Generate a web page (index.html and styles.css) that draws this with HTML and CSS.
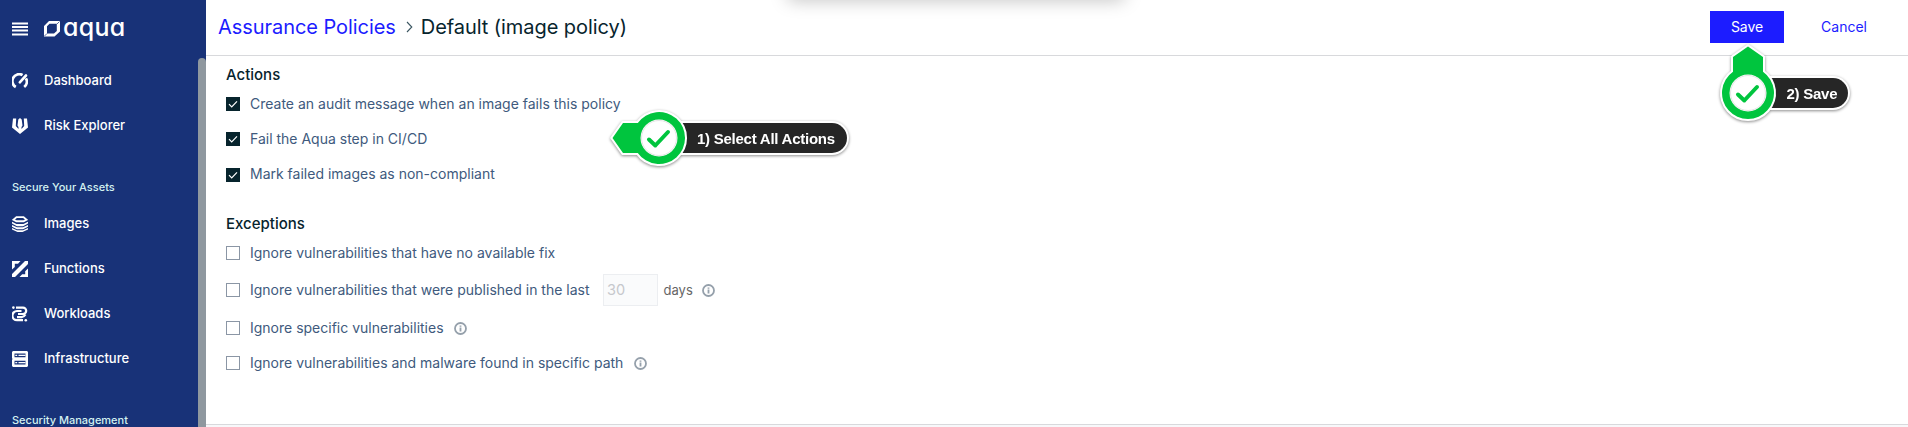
FILE: index.html
```html
<!DOCTYPE html>
<html lang="en">
<head>
<meta charset="utf-8">
<title>Assurance Policies</title>
<link rel="stylesheet" href="styles.css">
</head>
<body>
<div class="app">
  <aside class="sidebar">
    <div class="brand">
      <svg class="menu-icon" width="16" height="14" viewBox="0 0 16 14"><path d="M0 1.500h16M0 5h16M0 8.500h16M0 12.500h16" stroke="#fff" stroke-width="2"/></svg>
      <svg class="logo-mark" width="16" height="16" viewBox="0 0 16 16"><path fill="#fff" fill-rule="evenodd" d="M5 0H16V10.500L10.500 15.500H0V5ZM5.500 2.800L3 5.300V12.500H10L12.800 10V2.800Z"/><path d="M13 3L15.500.5M.5 15L3 12.500" stroke="#183278" stroke-width=".7"/></svg>
      <span class="logo-text">aqua</span>
    </div>
    <nav class="nav">
      <a class="nav-item"><svg class="nav-icon" viewBox="0 0 16 16"><path d="M3.800 14A6.600 6.600 0 0 1 10.500 2.100M13.900 5.400A6.600 6.600 0 0 1 12.200 14" fill="none" stroke="#fff" stroke-width="2.800"/><path d="M7.800 9.300L14 2.500" stroke="#fff" stroke-width="2.600" stroke-linecap="round"/></svg><span>Dashboard</span></a>
      <a class="nav-item"><svg class="nav-icon" viewBox="0 0 16 16"><path fill="#fff" d="M1 .5H4.200L3.800 8L6.500 11V9L5.500 7.500L6.300 1.500L8 0L9.700 1.500L10.500 7.500L9.500 9V11L12.200 8L11.800 .5H15L16 9.500L8 16L0 9.500Z"/></svg><span>Risk Explorer</span></a>
      <div class="nav-section"><span>Secure Your Assets</span></div>
      <a class="nav-item"><svg class="nav-icon" viewBox="0 0 16 16"><path d="M4.500 1.100H11.500L14.500 3.800L11.500 5.300H4.500L1.500 3.800Z" fill="none" stroke="#fff" stroke-width="1.900"/><path d="M0 5.800L4.500 8H11.500L16 5.800V7.500L11 10.300H5L0 7.500ZM0 9L5 11.300H11L16 9V10.800L11 13.300H5L0 10.800ZM0 12L5 14.200H11L16 12V13.500L10.500 16H5.500L0 13.500Z" fill="#fff"/></svg><span>Images</span></a>
      <a class="nav-item"><svg class="nav-icon" viewBox="0 0 16 16"><path fill="#fff" d="M0 0H8.500L6 2.800H2.800V6L0 8.500ZM13 0H16V3L3 16H0V13ZM16 7.500V16H7.500L10.200 13.200H13.200V10.200Z"/></svg><span>Functions</span></a>
      <a class="nav-item"><svg class="nav-icon" viewBox="0 0 16 16"><path d="M4 1.600H11A3.200 3.200 0 0 1 11 8H6M9.500 5H5A4.600 4.600 0 0 0 5 14.200H11M5 11.200H9.500Q12 11 13.500 8.500" fill="none" stroke="#fff" stroke-width="2.200"/><circle cx="1.400" cy="1.600" r="1.300" fill="#fff"/><circle cx="13.800" cy="14.200" r="1.300" fill="#fff"/></svg><span>Workloads</span></a>
      <a class="nav-item"><svg class="nav-icon" viewBox="0 0 16 16"><path fill="#fff" fill-rule="evenodd" d="M1 0H15L16 1V15L15 16H1L0 15V1ZM2.500 2.500V6.300H13.500V2.500ZM2.500 9.700V13.500H13.500V9.700ZM0 7.700V8.300H1V7.700Z"/><path d="M3.300 4.400H5.200M3.300 11.600H5.200M6.500 4.400H13.500M6.500 11.600H13.500" stroke="#fff" stroke-width="1.200"/></svg><span>Infrastructure</span></a>
      <div class="nav-section"><span>Security Management</span></div>
    </nav>
    <div class="scrollbar"></div>
  </aside>

  <main class="main">
    <header class="topbar">
      <div class="crumbs">
        <a class="crumb-link">Assurance Policies</a>
        <svg class="chevron" width="7" height="12" viewBox="0 0 7 12"><path d="M1 1L5.800 6L1 11" fill="none" stroke="#3a5560" stroke-width="1.100"/></svg>
        <span class="crumb-current">Default (image policy)</span>
      </div>
      <div class="topbar-actions">
        <button class="btn-save">Save</button>
        <a class="btn-cancel">Cancel</a>
      </div>
    </header>

    <section class="panel">
      <h2 class="group-title">Actions</h2>
      <div class="option"><span class="check checked"><svg viewBox="0 0 14 14"><path d="M3 7.200L5.700 10L11 4.300"/></svg></span><span class="label">Create an audit message when an image fails this policy</span></div>
      <div class="option mid-action"><span class="check checked"><svg viewBox="0 0 14 14"><path d="M3 7.200L5.700 10L11 4.300"/></svg></span><span class="label">Fail the Aqua step in CI/CD</span></div>
      <div class="option last-action"><span class="check checked"><svg viewBox="0 0 14 14"><path d="M3 7.200L5.700 10L11 4.300"/></svg></span><span class="label">Mark failed images as non-compliant</span></div>

      <h2 class="group-title">Exceptions</h2>
      <div class="option"><span class="check"></span><span class="label">Ignore vulnerabilities that have no available fix</span></div>
      <div class="option with-input"><span class="check"></span><span class="label">Ignore vulnerabilities that were published in the last</span><span class="days-input">30</span><span class="days">days</span><svg class="info" viewBox="0 0 13 13"><circle cx="6.500" cy="6.500" r="5.500"/><path d="M6.500 5.600V9.500M6.500 3.400V4.700"/></svg></div>
      <div class="option"><span class="check"></span><span class="label">Ignore specific vulnerabilities</span><svg class="info" viewBox="0 0 13 13"><circle cx="6.500" cy="6.500" r="5.500"/><path d="M6.500 5.600V9.500M6.500 3.400V4.700"/></svg></div>
      <div class="option"><span class="check"></span><span class="label">Ignore vulnerabilities and malware found in specific path</span><svg class="info" viewBox="0 0 13 13"><circle cx="6.500" cy="6.500" r="5.500"/><path d="M6.500 5.600V9.500M6.500 3.400V4.700"/></svg></div>
    </section>
    <div class="panel-end"></div>
  </main>
</div>

<div class="top-shadow"></div>

<div class="callout callout-actions">
  <span class="callout-pill">1) Select All Actions</span>
  <svg class="callout-pin" width="84" height="64" viewBox="-50 -32 84 64">
    <path d="M-46.500 0L-36 -15H-21.200A26 26 0 1 1 -21.200 15H-36Z" fill="#00c53e" stroke="#fff" stroke-width="4" paint-order="stroke"/>
    <circle r="18.500" fill="#fff"/><circle r="17.500" fill="none" stroke="#ddd" stroke-width=".8"/>
    <path d="M-10 1.500L-3.700 7.500L9 -6" fill="none" stroke="#00c53e" stroke-width="4" stroke-linecap="round" stroke-linejoin="round"/>
  </svg>
</div>
<div class="callout callout-save">
  <span class="callout-pill">2) Save</span>
  <svg class="callout-pin" width="64" height="84" viewBox="-32 -50 64 84">
    <path d="M0 -46.500L15 -36V-21.200A26 26 0 1 1 -15 -21.200V-36Z" fill="#00c53e" stroke="#fff" stroke-width="4" paint-order="stroke"/>
    <circle r="18.500" fill="#fff"/><circle r="17.500" fill="none" stroke="#ddd" stroke-width=".8"/>
    <path d="M-10 1.500L-3.700 7.500L9 -6" fill="none" stroke="#00c53e" stroke-width="4" stroke-linecap="round" stroke-linejoin="round"/>
  </svg>
</div>
</body>
</html>
```
FILE: styles.css
```css
* { box-sizing: border-box; }
body { margin: 0; background: #fff; font-family: Inter, "Liberation Sans", sans-serif; overflow: hidden; }
.app { display: flex; height: 427px; }

.sidebar { position: relative; flex: none; width: 206px; background: #183278; color: #fff; overflow: hidden; }
.brand { display: flex; align-items: flex-start; height: 58px; padding: 21px 0 0 12px; }
.menu-icon { margin: 1px 16px 0 0; }
.logo-mark { margin-right: 3px; }
.logo-text { font-size: 25px; line-height: 30px; margin-top: -9px; letter-spacing: .3px; font-weight: 500; font-feature-settings: "cv11"; }
.nav-item { display: flex; align-items: center; height: 45px; padding-left: 12px; font-size: 13px; font-weight: 500; }
.nav-item span { padding-bottom: 1px; }
.nav-icon { width: 16px; height: 16px; margin-right: 16px; }
.nav-section { height: 53px; padding: 31px 0 0 12px; font-size: 11px; line-height: 16px; font-weight: 500; color: #d3f1f0; }
.scrollbar { position: absolute; right: 0; top: 58px; width: 8px; height: 400px; border-radius: 4px; background: #8f989f; }

.main { flex: 1; display: flex; flex-direction: column; }
.topbar { display: flex; justify-content: space-between; height: 56px; padding: 11px 41px 0 12px; border-bottom: 1px solid #d8d9dc; }
.crumbs { display: flex; align-items: center; height: 31px; font-size: 20px; letter-spacing: -0.060px; color: #07242d; }
.crumb-link { color: #1c1cff; }
.chevron { margin: 0 8px 0 10px; }
.topbar-actions { display: flex; align-items: center; height: 32px; }
.btn-save { width: 74px; height: 32px; padding: 0; border: 0; background: #1c1cff; color: #fff; font: 400 14px/32px Inter, sans-serif; }
.btn-cancel { margin-left: 37px; font-size: 14px; line-height: 32px; color: #1c1cff; }

.panel { flex: none; height: 368px; padding: 9px 0 0 20px; }
.group-title { margin: 0 0 10px; font-size: 15px; line-height: 20px; font-weight: 500; color: #07242d; }
.option { display: flex; align-items: center; height: 18px; margin-bottom: 17px; font-size: 14px; line-height: 18px; color: #405a7d; }
.option.mid-action { margin-bottom: 18px; }
.option.last-action { margin-bottom: 30px; }
.last-action .label { padding-bottom: 2px; }
.check { width: 14px; height: 14px; margin-right: 10px; border: 1px solid #8b96a5; }
.check.checked { border: 0; background: #07242d; }
.check svg { display: block; width: 14px; height: 14px; fill: none; stroke: #fff; stroke-width: 1.200px; }
.option.with-input { height: 32px; margin: -5px 0 13px; }
.days-input { width: 55px; height: 32px; margin-left: 13.500px; padding-left: 3px; border: 1px solid #eceef1; background: #fafbfc; color: #c6c8cc; font-size: 14.500px; line-height: 30px; }
.days { margin-left: 5.500px; color: #666; font-size: 13px; }
.info { width: 13px; height: 13px; margin-left: 10.500px; fill: none; stroke: #95a0ab; stroke-width: 1.800px; }
.days + .info { margin-left: 9px; }
.panel-end { flex: 1; border-top: 1px solid #d8d9dc; background: #f7f8fa; }

.top-shadow { position: absolute; left: 788px; top: -20px; width: 336px; height: 16px; box-shadow: 0 4px 18px rgba(0, 0, 0, .26); }

.callout { position: absolute; filter: drop-shadow(0 1.500px 1.500px rgba(0, 0, 0, .45)); font: 700 15px/32px "Liberation Sans", sans-serif; letter-spacing: -0.250px; color: #fff; }
.callout-actions { left: 609px; top: 106px; width: 240px; height: 64px; }
.callout-save { left: 1716px; top: 43px; width: 140px; height: 84px; }
.callout-pin { position: absolute; left: 0; top: 0; }
.callout-pill { position: absolute; height: 30px; border-radius: 0 15px 15px 0; background: #262626; box-shadow: 0 0 0 2px #fff; white-space: nowrap; }
.callout-actions .callout-pill { left: 50px; top: 17px; width: 188px; padding-left: 38px; }
.callout-save .callout-pill { left: 32px; top: 35px; width: 100px; padding-left: 38.500px; }
```
